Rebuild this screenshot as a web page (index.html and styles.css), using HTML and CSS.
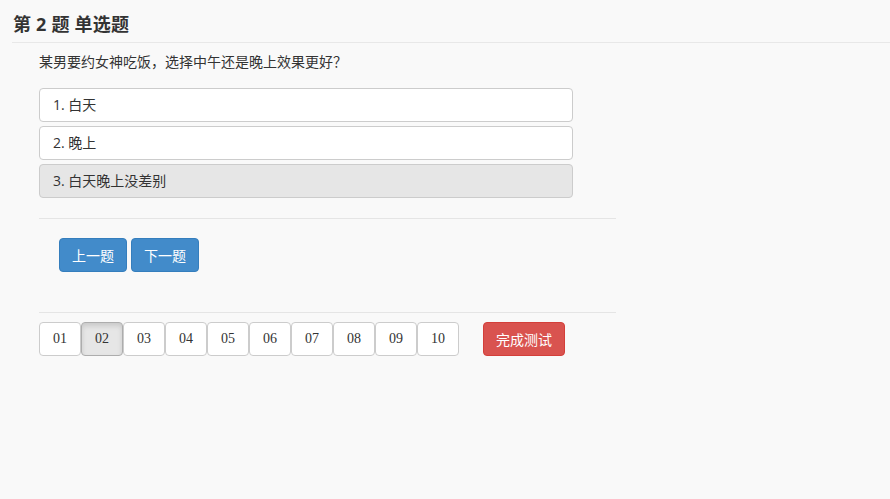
FILE: index.html
```html
<!DOCTYPE html>
<html lang="zh">
<head>
<meta charset="utf-8">
<title>第 2 题 单选题</title>
<link rel="stylesheet" href="styles.css">
</head>
<body>
<div class="header"><h3 class="title">第 2 题 单选题</h3></div>
<div class="content">
  <p class="question">某男要约女神吃饭，选择中午还是晚上效果更好？</p>
  <div class="options">
    <div class="option">1. 白天</div>
    <div class="option">2. 晚上</div>
    <div class="option selected">3. 白天晚上没差别</div>
  </div>
  <div class="rule"></div>
  <div class="nav">
    <button class="btn btn-primary">上一题</button>
    <button class="btn btn-primary">下一题</button>
  </div>
  <div class="rule rule-2"></div>
  <div class="pager">
    <div class="nums">
      <button class="num">01</button><button class="num active">02</button><button class="num">03</button><button class="num">04</button><button class="num">05</button><button class="num">06</button><button class="num">07</button><button class="num">08</button><button class="num">09</button><button class="num">10</button>
    </div>
    <button class="btn btn-danger">完成测试</button>
  </div>
</div>
</body>
</html>
```
FILE: styles.css
```css
html, body {
  margin: 0;
  padding: 0;
  background: #f9f9f9;
  color: #333;
  font-family: "Open Sans", "Noto Sans CJK SC", sans-serif;
}
.header {
  margin-left: 12px;
  border-bottom: 1px solid #e8e8e8;
  padding: 14px 0 7px 1px;
}
.title {
  margin: 0;
  font-size: 18px;
  line-height: 21px;
  font-weight: bold;
  color: #333;
  letter-spacing: 0.2px;
}
.content {
  padding-left: 39px;
  width: 577px;
}
.question {
  margin: 9px 0 16px;
  font-size: 14px;
  line-height: 20px;
  color: #333;
}
.options {
  display: flex;
  flex-direction: column;
  gap: 4px;
  width: 534px;
}
.option {
  box-sizing: border-box;
  height: 34px;
  line-height: 32px;
  padding-left: 13px;
  border: 1px solid #ccc;
  border-radius: 4px;
  background: #fff;
  font-size: 14px;
  color: #333;
}
.option.selected {
  background: #e6e6e6;
}
.rule {
  height: 1px;
  background: #e5e5e5;
  margin: 20px 0 19px;
}
.rule-2 {
  margin: 40px 0 9px;
}
.nav {
  display: flex;
  gap: 4px;
  padding-left: 20px;
}
.btn {
  box-sizing: border-box;
  height: 34px;
  padding: 0 12px;
  border: 1px solid transparent;
  border-radius: 4px;
  font-family: "Open Sans", "Noto Sans CJK SC", sans-serif;
  font-size: 14px;
  color: #fff;
  cursor: pointer;
}
.btn-primary {
  width: 68px;
  background: #428bca;
  border-color: #357ebd;
}
.btn-danger {
  width: 82px;
  background: #d9534f;
  border-color: #d43f3a;
}
.pager {
  display: flex;
  align-items: center;
  gap: 24px;
}
.nums {
  display: flex;
}
.num {
  box-sizing: border-box;
  width: 42px;
  height: 34px;
  padding: 0;
  border: 1px solid #ccc;
  border-radius: 4px;
  background: #fff;
  font-family: "Liberation Serif", serif;
  font-size: 14px;
  color: #333;
}
.num.active {
  background: #e6e6e6;
  border-color: #adadad;
  box-shadow: inset 0 3px 5px rgba(0, 0, 0, 0.125);
}
```
